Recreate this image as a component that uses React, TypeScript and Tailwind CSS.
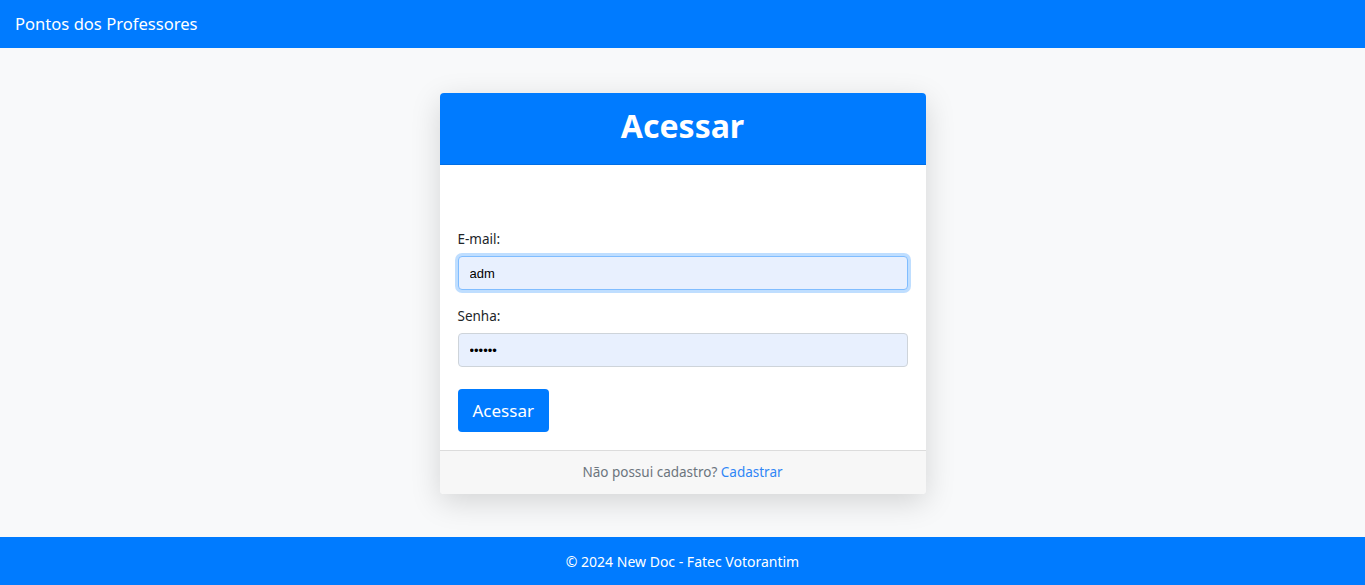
import React from 'react';

export default function App() {
  return (
    <div
      className="flex min-h-screen flex-col bg-[#f8f9fa] text-[#212529]"
      style={{ fontFamily: '"Noto Sans", "Open Sans", sans-serif' }}
    >
      <nav className="flex h-[48px] items-center bg-[#007bff] px-[15px]">
        <span className="text-[16.6px] text-white">Pontos dos Professores</span>
      </nav>

      <main className="flex flex-1 justify-center pt-[45px]">
        <div className="h-fit w-[486px] overflow-hidden rounded-[4px] bg-white shadow-[0_8px_30px_rgba(0,0,0,0.15)]">
          <div className="flex h-[72px] items-center justify-center bg-[#007bff] pb-[5px] border-b border-black/10">
            <h1 className="text-[32px] font-bold text-white">Acessar</h1>
          </div>

          <form className="px-[18px] pt-[64px] pb-[18px]">
            <div className="mb-[16px]">
              <label className="mb-[6px] block text-[13.5px] leading-[21px]">E-mail:</label>
              <input
                type="email"
                defaultValue="adm"
                className="h-[34px] w-full rounded-[4px] border border-[#80bdff] bg-[#e8f0fe] px-[11px] text-[13px] text-black shadow-[0_0_0_3px_rgba(0,123,255,0.25)] outline-none"
                style={{ fontFamily: '"Liberation Sans", Arial, sans-serif' }}
              />
            </div>
            <div className="mb-[22px]">
              <label className="mb-[6px] block text-[13.5px] leading-[21px]">Senha:</label>
              <input
                type="password"
                defaultValue="123456"
                className="h-[34px] w-full rounded-[4px] border border-[#ced4da] bg-[#e8f0fe] px-[11px] text-[13px] text-black outline-none"
                style={{ fontFamily: '"Liberation Sans", Arial, sans-serif' }}
              />
            </div>
            <button
              type="button"
              className="h-[43px] rounded-[4px] bg-[#007bff] px-[15px] text-[17px] text-white"
            >
              Acessar
            </button>
          </form>

          <div className="flex h-[44px] items-center justify-center border-t border-[#dcdcdc] bg-[#f7f7f7] text-[13.5px] text-[#6c757d]">
            Não possui cadastro?&nbsp;<a className="text-[#2f86f6]">Cadastrar</a>
          </div>
        </div>
      </main>

      <footer className="flex h-[48px] items-center justify-center bg-[#007bff] text-[14px] text-white">
        © 2024 New Doc - Fatec Votorantim
      </footer>
    </div>
  );
}
